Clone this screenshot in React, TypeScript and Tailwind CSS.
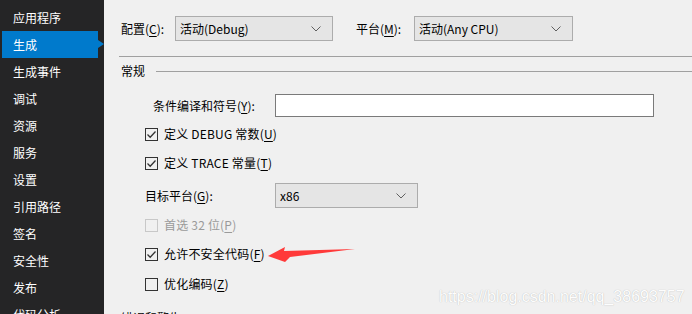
import React from "react";

const font = "font-['Microsoft_YaHei','Noto_Sans_CJK_SC',sans-serif]";

function Chevron() {
  return (
    <svg width="10" height="6" viewBox="0 0 10 6" className="shrink-0">
      <polyline points="0.5,0.5 5,5 9.5,0.5" fill="none" stroke="#606060" strokeWidth="1" />
    </svg>
  );
}

function Select({ text, w }: { text: string; w: string }) {
  return (
    <div className={`${w} h-[25px] bg-[#e5e5e5] border border-[#acacac] flex items-center pl-[4px] pr-[11px] justify-between text-black`}>
      <span>{text}</span>
      <Chevron />
    </div>
  );
}

function Check({ checked, disabled }: { checked?: boolean; disabled?: boolean }) {
  return (
    <div
      className={`w-[13px] h-[13px] border ${disabled ? "border-[#c8c8c8]" : "border-[#333333]"} bg-transparent flex items-center justify-center shrink-0`}
    >
      {checked && (
        <svg width="11" height="11" viewBox="0 0 11 11">
          <polyline points="1.5,5.5 4.2,8.2 9.5,2.5" fill="none" stroke="#333333" strokeWidth="1.3" />
        </svg>
      )}
    </div>
  );
}

function CheckRow({ mt, children, checked, disabled }: { mt: string; children: React.ReactNode; checked?: boolean; disabled?: boolean }) {
  return (
    <div className={`${mt} h-[20px] shrink-0 ml-[41px] flex items-center gap-[6px] ${disabled ? "text-[#9a9a9a]" : "text-black"}`}>
      <Check checked={checked} disabled={disabled} />
      <span className="tracking-[0.2px]">{children}</span>
    </div>
  );
}

const items = ["应用程序", "生成", "生成事件", "调试", "资源", "服务", "设置", "引用路径", "签名", "安全性", "发布", "代码分析"];

export default function App() {
  return (
    <div className={`w-[692px] h-[314px] overflow-hidden flex bg-[#f0f0f0] text-[12px] relative ${font}`}>
      <div className="w-[104px] shrink-0 bg-[#252526] pt-[4px] flex flex-col text-white">
        {items.map((it) =>
          it === "生成" ? (
            <div key={it} className="h-[27px] shrink-0 relative flex">
              <div className="ml-[2px] w-[96px] h-[27px] bg-[#007acc] flex items-center pl-[11px]">{it}</div>
              <div className="absolute left-[98px] top-[9px] w-0 h-0 border-y-[4.5px] border-y-transparent border-l-[6px] border-l-[#007acc]" />
            </div>
          ) : (
            <div key={it} className="h-[27px] shrink-0 flex items-center pl-[13px]">
              {it}
            </div>
          )
        )}
      </div>

      <div className="flex-1 flex flex-col text-black">
        <div className="mt-[16px] h-[25px] shrink-0 flex items-center pl-[17px]">
          <span className="w-[54px]">
            配置(<u className="underline-offset-2">C</u>):
          </span>
          <Select text="活动(Debug)" w="w-[158px]" />
          <span className="ml-[23px] w-[58px]">
            平台(<u className="underline-offset-2">M</u>):
          </span>
          <Select text="活动(Any CPU)" w="w-[159px]" />
        </div>

        <div className="mt-[15px] ml-[15px] h-px shrink-0 bg-[#a0a0a0]" />

        <div className="mt-[4px] h-[20px] shrink-0 flex items-center pl-[17px]">
          <span>常规</span>
          <div className="ml-[11px] flex-1 h-px bg-[#a0a0a0]" />
        </div>

        <div className="mt-[13px] h-[23px] shrink-0 flex items-center ml-[49px]">
          <span className="w-[122px]">
            条件编译和符号(<u className="underline-offset-2">Y</u>):
          </span>
          <div className="w-[379px] h-[23px] bg-white border border-[#7a7a7a]" />
        </div>

        <CheckRow mt="mt-[7px]" checked>
          定义 DEBUG 常数(<u className="underline-offset-2">U</u>)
        </CheckRow>
        <CheckRow mt="mt-[9px]" checked>
          定义 TRACE 常量(<u className="underline-offset-2">T</u>)
        </CheckRow>

        <div className="mt-[10px] h-[25px] shrink-0 flex items-center ml-[41px]">
          <span className="w-[130px]">
            目标平台(<u className="underline-offset-2">G</u>):
          </span>
          <Select text="x86" w="w-[143px]" />
        </div>

        <CheckRow mt="mt-[7px]" disabled>
          首选 32 位(<u className="underline-offset-2">P</u>)
        </CheckRow>
        <CheckRow mt="mt-[9px]" checked>
          允许不安全代码(<u className="underline-offset-2">F</u>)
        </CheckRow>
        <CheckRow mt="mt-[10px]">
          优化编码(<u className="underline-offset-2">Z</u>)
        </CheckRow>

        <div className="mt-[14px] h-[20px] flex items-center pl-[17px] shrink-0">错误和警告</div>
      </div>

      <svg className="absolute left-[266px] top-[245px]" width="92" height="20" viewBox="0 0 92 20">
        <polygon points="2,11 19,2 18,6 89,4 24,12 19,17" fill="#ff3a3a" />
      </svg>

      <div className="absolute left-[439px] top-[285px] font-['Liberation_Sans',Arial,sans-serif] text-[16px] text-[#fdfdfd] [text-shadow:0_0_1px_rgba(0,0,0,0.28)] whitespace-nowrap">
        https://blog.csdn.net/qq_38693757
      </div>
    </div>
  );
}
